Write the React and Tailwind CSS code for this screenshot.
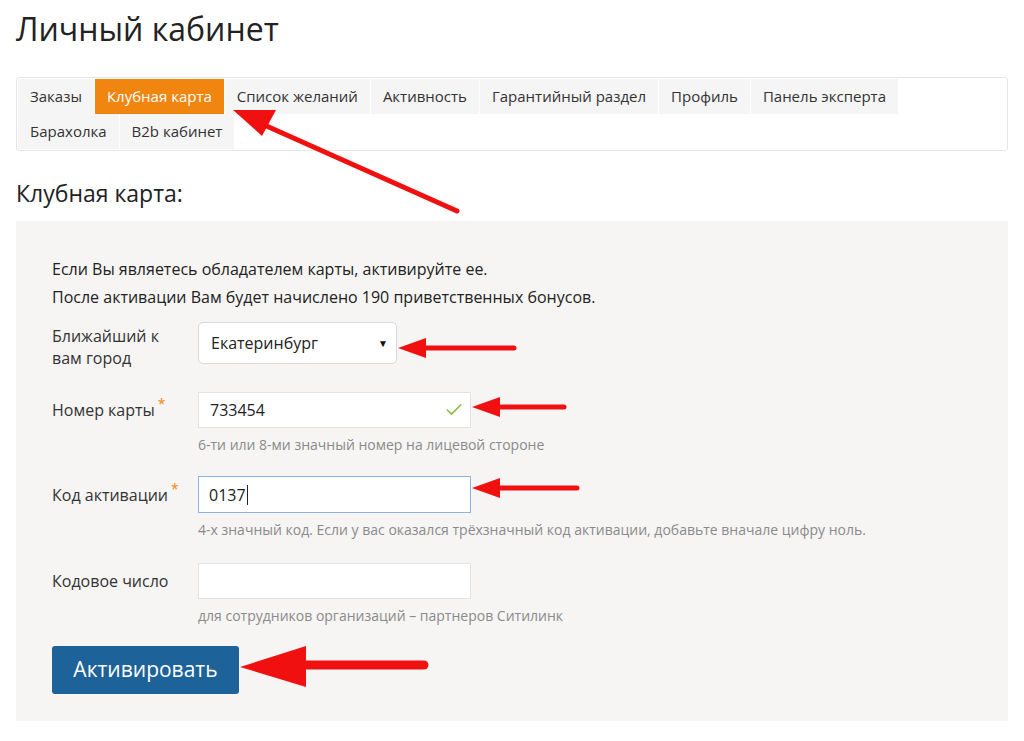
import { Check } from 'lucide-react'

const TABS_ROW1 = ['Заказы', 'Клубная карта', 'Список желаний', 'Активность', 'Гарантийный раздел', 'Профиль', 'Панель эксперта']
const TABS_ROW2 = ['Барахолка', 'B2b кабинет']

function Tab({ label }) {
  const active = label === 'Клубная карта'
  return (
    <div
      className={
        'h-[35px] px-[12px] flex items-center text-[15px] border-r border-white ' +
        (active ? 'bg-[#f0850f] text-white' : 'bg-[#f5f5f5] text-[#333]')
      }
    >
      {label}
    </div>
  )
}

function Field({ label, required, help, children }) {
  return (
    <div className="flex flex-col">
      <div className="flex items-center">
        <div className="w-[146px] text-[16px] text-[#333] leading-[22px]">
          {label}
          {required && <sup className="text-[#f0850f] text-[14px] ml-[3px]">*</sup>}
        </div>
        {children}
      </div>
      {help && <div className="ml-[146px] mt-[7px] text-[14px] leading-[19px] text-[#8a8a8a]">{help}</div>}
    </div>
  )
}

function Arrows() {
  return (
    <svg className="absolute inset-0 pointer-events-none" width="1024" height="741">
      <g stroke="#f01010" strokeWidth="5" strokeLinecap="round" fill="#f01010">
        <line x1="457" y1="211" x2="262" y2="124" />
        <polygon points="233,110 276,110 262,136" stroke="none" />
        <line x1="514" y1="348" x2="420" y2="348" />
        <polygon points="398,348 426,338 426,358" stroke="none" />
        <line x1="564" y1="407" x2="492" y2="407" />
        <polygon points="472,407 500,397 500,417" stroke="none" />
        <line x1="577" y1="488" x2="494" y2="488" />
        <polygon points="472,488 500,478 500,498" stroke="none" />
        <line x1="424" y1="665" x2="300" y2="665" strokeWidth="9" />
        <polygon points="240,667 306,646 306,687" stroke="none" />
      </g>
    </svg>
  )
}

export default function App() {
  return (
    <div className="relative w-[1024px] h-[741px] bg-white overflow-hidden" style={{ fontFamily: '"Open Sans", "Noto Sans", sans-serif' }}>
      <div className="px-[16px] pt-[9px]">
        <h1 className="text-[32px] text-[#222] leading-[40px]">Личный кабинет</h1>

        <div className="mt-[28px] border border-[#e6e6e6] rounded-[3px] p-[1px] h-[74px]">
          <div className="flex flex-wrap w-[890px]">
            {TABS_ROW1.map(t => <Tab key={t} label={t} />)}
          </div>
          <div className="flex">
            {TABS_ROW2.map(t => <Tab key={t} label={t} />)}
          </div>
        </div>

        <h2 className="mt-[26px] text-[23px] text-[#222] leading-[32px]">Клубная карта:</h2>

        <div className="mt-[12px] h-[500px] bg-[#f6f5f4] pl-[36px] pt-[34px]">
          <p className="text-[16px] text-[#222] leading-[28px]">Если Вы являетесь обладателем карты, активируйте ее.</p>
          <p className="text-[16px] text-[#222] leading-[28px]">После активации Вам будет начислено 190 приветственных бонусов.</p>

          <div className="mt-[14px] flex flex-col">
            <Field label={<span>Ближайший к<br />вам город</span>}>
              <div className="w-[199px] h-[42px] bg-white border border-[#d9d9d9] rounded-[5px] flex items-center justify-between pl-[12px] pr-[8px] text-[16px] text-[#222] -mt-[8px]">
                Екатеринбург
                <span className="text-[10px] text-[#111]">▼</span>
              </div>
            </Field>

            <div className="mt-[23px]">
              <Field label="Номер карты" required help="6-ти или 8-ми значный номер на лицевой стороне">
                <div className="w-[273px] h-[36px] bg-white border border-[#e3e3e3] flex items-center justify-between pl-[11px] pr-[6px] text-[16px] text-[#222]">
                  733454
                  <Check size={20} strokeWidth={2} className="text-[#8cbc4a]" />
                </div>
              </Field>
            </div>

            <div className="mt-[22px]">
              <Field label="Код активации" required help="4-х значный код. Если у вас оказался трёхзначный код активации, добавьте вначале цифру ноль.">
                <div className="w-[273px] h-[37px] bg-white border border-[#8db3e2] flex items-center pl-[10px] text-[16px] text-[#222]">
                  0137<span className="inline-block w-px h-[20px] bg-[#222] ml-px"></span>
                </div>
              </Field>
            </div>

            <div className="mt-[24px]">
              <Field label="Кодовое число" help="для сотрудников организаций – партнеров Ситилинк">
                <div className="w-[273px] h-[36px] bg-white border border-[#e3e3e3]"></div>
              </Field>
            </div>

            <button className="mt-[21px] w-[187px] h-[48px] bg-[#1d6299] rounded-[3px] text-white text-[21px]">
              Активировать
            </button>
          </div>
        </div>
      </div>
      <Arrows />
    </div>
  )
}
